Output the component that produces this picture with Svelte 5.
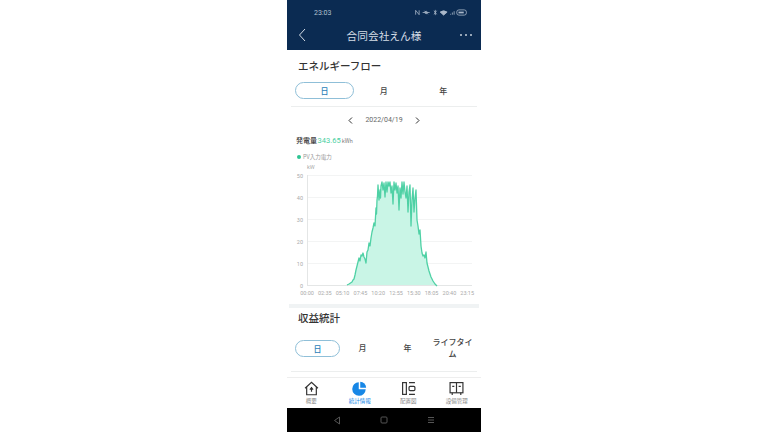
<script>
  const yTicks = [50, 40, 30, 20, 10, 0];
  const xTicks = ['00:00', '02:35', '05:10', '07:45', '10:20', '12:55', '15:30', '18:05', '20:40', '23:15'];

  // chart box sits at x=287, y=163 on the page; points are in page px and shifted below
  const raw = [
    [347,285],[349,284],[352,282],[353,280],[354,279],[355,275],[356,270],[357,266],[358,262],[359,258],[360,261],[361,255],[362,256],[363,253],[364,257],[365,259],[366,263],
    [367,252],[368,250],[369,243],[370,246],[371,238],[372,232],[373,228],[374,223],[375,226],[376,208],[376.500,214],[377,200],[377.500,196],[378,185],[379,200],[380,190],[380.500,198],[381,186],[382,182],
    [383,190],[384,183],[385,197],[386,182],[387,192],[388,182],[389,186],[390,182],[391,193],[392,186],[393,204],[394,182],[395,190],[396,183],[397,193],[398,186],[399,210],[400,188],[401,198],[402,182],
    [403,194],[404,182],[405,192],[406,198],[407,186],[408,212],[409,192],[410,185],[411,226],[412,200],[413,188],[414,212],[415,198],[416,190],[417,220],
    [418,226],[419,234],[420,230],[421,246],[422,253],[423,256],[424,255],[425,258],[426,252],[427,263],[428,267],[429,271],[431,277],[433,281],[435,284],[437,286]
  ];
  const pts = raw.map(([x, y]) => `${x - 287},${y - 163}`).join(' ');
  const area = `60,122 ${pts} 150,122`;
</script>

<div class="phone">
  <header class="top">
    <div class="status">
      <span class="time">23:03</span>
      <svg class="icons" width="54" height="7" viewBox="0 0 60 8" fill="none" stroke="#aab8c9" stroke-width="0.9">
        <path d="M1 6.500V1.500L5 6.500V1.500" />
        <circle cx="13" cy="4" r="1.400" />
        <path d="M9 4h8M11 2l4 4" />
        <path d="M22 2l3 4M25 2l-3 4M23.500 1v6" />
        <path d="M29 3.500q4-3 8 0l-4 3.500z" fill="#aab8c9" />
        <path d="M41 6.500v-1M43 6.500v-2.500M45 6.500v-4" />
        <rect x="48" y="1" width="11" height="6" rx="2.500" />
        <rect x="50" y="3" width="6" height="2" fill="#aab8c9" stroke="none" />
      </svg>
    </div>
    <div class="bar">
      <svg class="back" width="9" height="14" viewBox="0 0 9 14" fill="none" stroke="#d5dde6" stroke-width="1"><path d="M7 1L1.500 7 7 13" /></svg>
      <span class="title">合同会社えん様</span>
      <span class="more"><i></i><i></i><i></i></span>
    </div>
  </header>

  <main class="content">
    <section class="flow">
      <h2>エネルギーフロー</h2>
      <div class="tabs">
        <span class="tab active">日</span>
        <span class="tab">月</span>
        <span class="tab">年</span>
      </div>
      <div class="rule"></div>

      <div class="date">
        <svg width="5" height="7" viewBox="0 0 5 7" fill="none" stroke="#333" stroke-width="1"><path d="M4 .5L1 3.500l3 3" /></svg>
        <span>2022/04/19</span>
        <svg width="5" height="7" viewBox="0 0 5 7" fill="none" stroke="#333" stroke-width="1"><path d="M1 .5l3 3-3 3" /></svg>
      </div>

      <div class="yield">発電量 <b>343.65</b><small>kWh</small></div>
      <div class="legend"><i></i>PV入力電力</div>

      <svg class="chart" width="194" height="136" viewBox="0 0 194 136">
        <text x="20" y="6" class="lbl">kW</text>
        {#each yTicks as t, i}
          {#if t > 0}
            <line x1="20" x2="185" y1={12.500 + i * 22} y2={12.500 + i * 22} stroke="#f3f4f4" stroke-width="1" />
          {/if}
          <text x="16" y={14.500 + i * 22} class="lbl" text-anchor="end">{t}</text>
        {/each}
        <line x1="20.500" x2="20.500" y1="12" y2="122" stroke="#e4e6e6" stroke-width="1" />
        <line x1="20" x2="185" y1="122.500" y2="122.500" stroke="#e4e6e6" stroke-width="1" />
        <polygon points={area} fill="#c9f5e6" />
        <polyline points={pts} fill="none" stroke="#4fd1a5" stroke-width="1.300" stroke-linejoin="round" />
        {#each xTicks as t, i}
          <text x={20 + i * 17.800} y="132" class="lbl" text-anchor="middle">{t}</text>
        {/each}
      </svg>
    </section>

    <div class="gap"></div>

    <section class="income">
      <h2>収益統計</h2>
      <div class="tabs four">
        <span class="tab active">日</span>
        <span class="tab">月</span>
        <span class="tab">年</span>
        <span class="tab">ライフタイム</span>
      </div>
      <div class="rule"></div>
    </section>
  </main>

  <nav class="tabbar">
    <div class="item">
      <svg width="15" height="15" viewBox="0 0 14 14" fill="none" stroke="#333" stroke-width="1.100">
        <path d="M1 6.800L7 1.200l6 5.600M2.500 5.800V12.800h9V5.800" />
        <path d="M7 5.500v4.500M5.500 8L7 6.200 8.500 8" />
      </svg>
      <span>概要</span>
    </div>
    <div class="item on">
      <svg width="15" height="15" viewBox="0 0 14 14">
        <path d="M6.300 1.200v6.500h6.500A6.300 6.300 0 1 1 6.300 1.200z" fill="#1787e6" />
        <path d="M7.700 .8a5.600 5.600 0 0 1 5.500 5.500H7.700z" fill="#1787e6" />
      </svg>
      <span>統計情報</span>
    </div>
    <div class="item">
      <svg width="15" height="15" viewBox="0 0 14 14" fill="none" stroke="#333" stroke-width="1.100">
        <rect x="1.500" y="1.500" width="3.500" height="11" />
        <path d="M7.500 1.500h5.500M7.500 12.500h5.500" />
        <rect x="7.500" y="5" width="5.500" height="4" rx="1" />
      </svg>
      <span>配置図</span>
    </div>
    <div class="item">
      <svg width="15" height="15" viewBox="0 0 14 14" fill="none" stroke="#333" stroke-width="1.100">
        <rect x="1" y="1.500" width="12" height="9.500" />
        <path d="M7 1.500V11M3 11v2M11 11v2M3 5h2M9 5h2" />
      </svg>
      <span>設備管理</span>
    </div>
  </nav>

  <footer class="sysnav">
    <svg width="8" height="9" viewBox="0 0 8 9" fill="none" stroke="#555" stroke-width="1"><path d="M6.500 1L1.500 4.500l5 3.500z" /></svg>
    <svg width="8" height="8" viewBox="0 0 8 8" fill="none" stroke="#555" stroke-width="1"><rect x="1" y="1" width="6" height="6" rx="1" /></svg>
    <svg width="8" height="8" viewBox="0 0 8 8" fill="none" stroke="#555" stroke-width="1"><path d="M1 1.500h6M1 4h6M1 6.500h6" /></svg>
  </footer>
</div>

<style>
  :global(body) { margin: 0; background: #fff; }
  .phone { width: 194px; height: 432px; margin-left: 287px; display: flex; flex-direction: column; overflow: hidden; background: #fff; font-family: "Noto Sans CJK JP", "Noto Sans", sans-serif; color: #333; }

  .top { background: #0b2b52; height: 50px; flex: none; }
  .status { height: 24px; display: flex; align-items: center; justify-content: space-between; padding: 1px 13px 0 27px; box-sizing: border-box; }
  .time { font: 7px "Roboto", sans-serif; color: #b4c1cf; }
  .bar { height: 22px; display: flex; align-items: center; justify-content: space-between; padding: 0 9px 0 11px; position: relative; }
  .title { position: absolute; left: 0; right: 0; text-align: center; font-size: 10.700px; color: #d5dde6; }
  .more { display: flex; gap: 3px; }
  .more i { width: 2px; height: 2px; border-radius: 50%; background: #c5cfda; }

  .content { flex: 1; min-height: 0; }
  h2 { margin: 0; font-size: 10.500px; line-height: 15px; font-weight: 500; color: #333; padding-left: 11px; }
  .flow h2 { padding-top: 8px; }
  .tabs { display: flex; padding: 0 8px; margin-top: 9px; height: 17px; align-items: center; }
  .tab { flex: 1; text-align: center; font-size: 8px; line-height: 10px; font-weight: 500; color: #444; }
  .tab.active { flex: none; width: 57px; height: 15px; line-height: 15px; border: 1px solid #8fbfd8; border-radius: 9px; color: #2d7fb8; }
  .rule { height: 1px; background: #eceeee; margin: 7px 4px 0; }

  .date { display: flex; align-items: center; justify-content: center; gap: 12px; height: 14px; margin-top: 6px; font-size: 7px; color: #666; font-family: "Roboto", sans-serif; }
  .yield { margin-top: 7px; padding-left: 9px; font-size: 7px; line-height: 12px; color: #444; font-weight: 500; word-spacing: -1px; }
  .yield b { color: #47cfa1; font-weight: 400; font-size: 7.500px; font-family: "Roboto", sans-serif; }
  .yield small { font-size: 5.500px; font-weight: 400; color: #777; margin-left: 1px; }
  .legend { display: flex; align-items: center; gap: 2px; margin-top: 6px; padding-left: 10px; font-size: 5.500px; line-height: 8px; color: #999; }
  .legend i { width: 4px; height: 4px; border-radius: 50%; background: #2ec493; }
  .chart { display: block; margin-top: 2px; }
  .lbl { font-size: 5.500px; fill: #aaa; font-family: "Roboto", sans-serif; }

  .gap { height: 4px; background: #f0f3f4; margin: 5px 2px 0; }

  .income h2 { padding-top: 2px; }
  .four { margin-top: 11px; height: 24px; padding: 0 7px 0 8px; }
  .four .tab { flex: none; width: 45px; line-height: 12px; }
  .four .tab.active { width: 43px; line-height: 15px; }
  .income .rule { margin-top: 11px; }

  .tabbar { height: 31px; flex: none; display: flex; padding-top: 3px; box-sizing: border-box; border-top: 1px solid #eee; }
  .item { flex: 1; display: flex; flex-direction: column; align-items: center; gap: 2px; font-size: 5.500px; line-height: 7px; color: #888; }
  .item.on { color: #1787e6; }
  .sysnav { height: 24px; flex: none; background: #000; display: flex; align-items: center; justify-content: center; gap: 39px; }
</style>
